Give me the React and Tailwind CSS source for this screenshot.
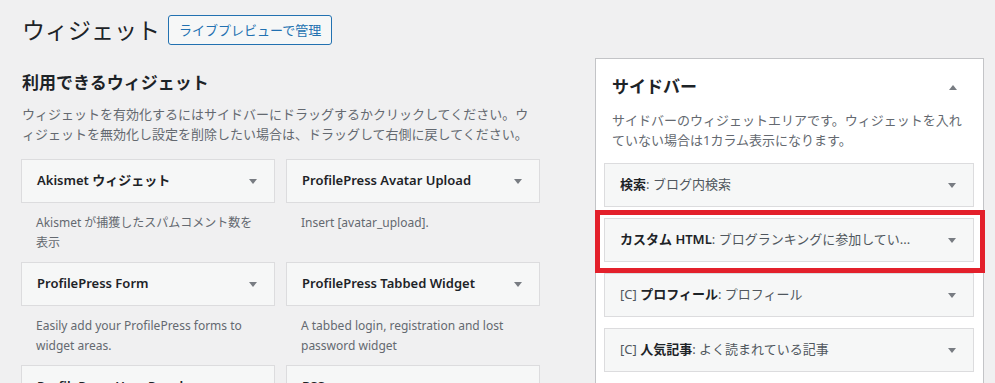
import React from "react";

const FONT = { fontFamily: '"Noto Sans", "Noto Sans CJK JP", sans-serif' };

function Down() {
  return (
    <svg width="8" height="5" viewBox="0 0 8 5" className="shrink-0">
      <polygon points="0,0 8,0 4,5" fill="#787c82" />
    </svg>
  );
}
function Up() {
  return (
    <svg width="8" height="5" viewBox="0 0 8 5" className="shrink-0">
      <polygon points="0,5 8,5 4,0" fill="#787c82" />
    </svg>
  );
}

const avail = [
  { t: "Akismet ウィジェット", d: ["Akismet が捕獲したスパムコメント数を", "表示"] },
  { t: "ProfilePress Avatar Upload", d: ["Insert [avatar_upload]."] },
  { t: "ProfilePress Form", d: ["Easily add your ProfilePress forms to", "widget areas."] },
  { t: "ProfilePress Tabbed Widget", d: ["A tabbed login, registration and lost", "password widget"] },
  { t: "ProfilePress User Panel", d: [""] },
  { t: "RSS", d: [""] },
];

function SideWidget({ children, highlight }) {
  return (
    <div className="relative">
      <div className="h-[44px] border border-[#dcdcde] bg-[#f6f7f7] flex items-center justify-between pl-[15px] pr-[17px] text-[13px] text-[#50575e]">
        <div className="whitespace-nowrap">{children}</div>
        <Down />
      </div>
      {highlight && (
        <div className="absolute -top-[8px] -left-[9px] -right-[11px] -bottom-[11px] border-[5px] border-[#e3202b] pointer-events-none" />
      )}
    </div>
  );
}

export default function App() {
  return (
    <div className="w-[995px] h-[383px] overflow-hidden bg-[#f0f0f1] text-[#1d2327]" style={FONT}>
      <div className="flex items-center pl-[22px] pt-[15px]">
        <h1 className="text-[23px] leading-[30px] font-normal">ウィジェット</h1>
        <button className="ml-[8px] h-[30px] px-[10px] text-[13px] leading-[28px] border border-[#2271b1] text-[#2271b1] bg-[#f6f7f7] rounded-[3px]">
          ライブプレビューで管理
        </button>
      </div>
      <div className="flex pl-[21px]">
        <div className="w-[519px] shrink-0">
          <h2 className="mt-[26px] pl-[1px] text-[17px] leading-[24px] font-bold">利用できるウィジェット</h2>
          <p className="mt-[9px] pl-[1px] text-[13px] leading-[20px] text-[#646970] whitespace-nowrap">
            ウィジェットを有効化するにはサイドバーにドラッグするかクリックしてください。ウ
            <br />
            ィジェットを無効化し設定を削除したい場合は、ドラッグして右側に戻してください。
          </p>
          <div className="mt-[15px] grid grid-cols-[254px_254px] gap-x-[11px]">
            {avail.map((w, i) => (
              <div key={i}>
                <div className="h-[44px] border border-[#dcdcde] bg-[#f6f7f7] flex items-center justify-between pl-[15px] pr-[17px]">
                  <span className="text-[13px] font-semibold text-[#1d2327] whitespace-nowrap">{w.t}</span>
                  <Down />
                </div>
                <div className="h-[59px] pt-[10px] pl-[15px] text-[12px] leading-[20px] text-[#646970] whitespace-nowrap">
                  {w.d.map((l, j) => (
                    <div key={j}>{l}</div>
                  ))}
                </div>
              </div>
            ))}
          </div>
        </div>
        <div className="ml-[55px] mt-[13px] w-[389px] shrink-0 border border-[#c3c4c7] bg-white h-[400px]">
          <div className="pt-[16px] pl-[16px] pr-[26px] flex items-center justify-between">
            <h2 className="text-[17px] leading-[24px] font-bold">サイドバー</h2>
            <Up />
          </div>
          <p className="mt-[11px] pl-[16px] text-[13px] leading-[20px] text-[#646970] whitespace-nowrap">
            サイドバーのウィジェットエリアです。ウィジェットを入れ
            <br />
            ていない場合は1カラム表示になります。
          </p>
          <div className="mt-[13px] pl-[8px] w-[378px] flex flex-col gap-[11px]">
            <SideWidget>
              <span className="font-semibold text-[#1d2327]">検索</span>: ブログ内検索
            </SideWidget>
            <SideWidget highlight>
              <span className="font-semibold text-[#1d2327]">カスタム HTML</span>: ブログランキングに参加してい...
            </SideWidget>
            <SideWidget>
              [C] <span className="font-semibold text-[#1d2327]">プロフィール</span>: プロフィール
            </SideWidget>
            <SideWidget>
              [C] <span className="font-semibold text-[#1d2327]">人気記事</span>: よく読まれている記事
            </SideWidget>
          </div>
        </div>
      </div>
    </div>
  );
}
